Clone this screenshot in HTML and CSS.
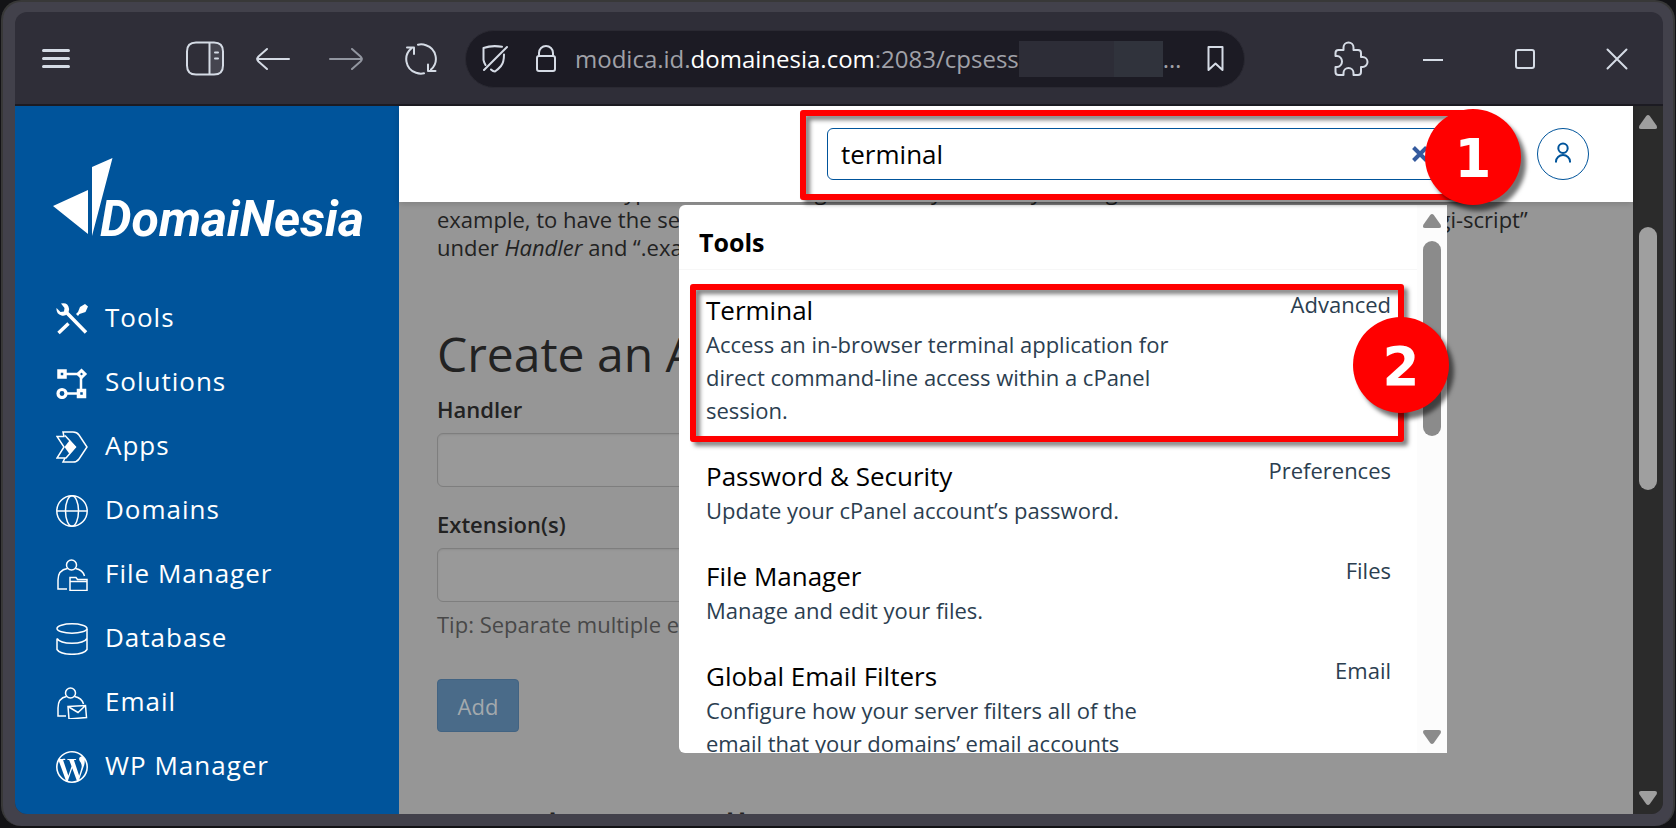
FILE: index.html
```html
<!DOCTYPE html>
<html lang="en">
<head>
<meta charset="utf-8">
<title>cPanel - Apache Handlers</title>
<link rel="stylesheet" href="styles.css">
</head>
<body>
<div class="window">
  <div class="browser">
    <div class="toolbar">
      <button class="tool tool-menu" aria-label="Menu"><svg width="28" height="20" viewBox="0 0 28 20"><path d="M1.5 1.5h25M1.5 9.5h25M1.5 17.5h25" stroke-width="3"/></svg></button>
      <button class="tool tool-side" aria-label="Sidebar"><svg width="38" height="36" viewBox="0 0 38 36"><path d="M24 2h4q8 0 8 8v16q0 8-8 8h-4z" fill="#45454f" stroke="none"/><path d="M10 1.500h18q9 0 9 9v14q0 9-9 9H10q-9 0-9-9v-14q0-9 9-9zM23.500 1.500v32M29 11.500h3M29 17.500h3" stroke-width="2"/></svg></button>
      <button class="tool tool-back" aria-label="Back"><svg width="36" height="24" viewBox="0 0 36 24"><path d="M34 12H2M12 2L3.500 9.500Q1 12 3.500 14.500L12 22" stroke-width="2"/></svg></button>
      <button class="tool tool-forward" aria-label="Forward" disabled><svg width="36" height="24" viewBox="0 0 36 24"><path d="M2 12h32M24 2l8.500 7.500Q35 12 32.500 14.500L24 22" stroke-width="2"/></svg></button>
      <button class="tool tool-reload" aria-label="Reload"><svg width="32" height="32" viewBox="0 0 32 32"><path d="M13 1.700Q17 .8 21 2.200A14.300 14.300 0 0 1 26 26.500M19 30.300Q15 31.200 11 29.800A14.300 14.300 0 0 1 6.500 5.200M2 4.500h7v6.500M30.500 28h-7.500v-6.500" stroke-width="2"/></svg></button>
      <div class="address">
        <svg width="26" height="28" viewBox="0 0 26 28"><path d="M20 1.800Q10 0 1.500 3v12q.5 2.500 2 5M22 9.500q0 8-3 11.500t-6 5.500q-2 0-4-2M25 2L2 25" stroke-width="2"/></svg>
        <svg class="lock" width="20" height="28" viewBox="0 0 20 28"><path d="M3 11V8a7 7 0 0 1 14 0v3M3 11h14q2 0 2 2v11q0 2-2 2H3q-2 0-2-2V13q0-2 2-2z" stroke-width="2"/></svg>
        <div class="url"><span>modica.id.</span><strong>domainesia.com</strong><span>:2083/cpsess</span><i class="redacted"></i><span>…</span></div>
        <button class="tool bookmark" aria-label="Bookmark"><svg width="18" height="28" viewBox="0 0 18 28"><path d="M1.500 2h14v23l-7-6.500-7 6.500z" stroke-width="2"/></svg></button>
      </div>
      <button class="tool tool-ext" aria-label="Extensions"><svg width="36" height="36" viewBox="0 0 36 36"><path d="M1.500 15V12Q1.500 9 4.500 9H9.500V6.500A5 5 0 0 1 19.500 6.500V9H24Q27 9 27 12V16H28.500A5 5 0 0 1 28.500 26H27V31Q27 34 24 34H19.500V32A5 5 0 0 0 9.500 32V34H4.500Q1.500 34 1.500 31V26H3A5 5.500 0 0 0 3 15Z" stroke-width="2"/></svg></button>
      <button class="tool tool-win" aria-label="Minimize"><svg width="22" height="22" viewBox="0 0 22 22"><path d="M1 12h20" stroke-width="2" stroke-linecap="butt"/></svg></button>
      <button class="tool tool-win" aria-label="Maximize"><svg width="22" height="22" viewBox="0 0 22 22"><rect x="2" y="2" width="18" height="18" rx="2" stroke-width="2"/></svg></button>
      <button class="tool tool-win" aria-label="Close"><svg width="22" height="22" viewBox="0 0 22 22"><path d="M1.500 1.500l19 19M20.500 1.500l-19 19" stroke-width="2"/></svg></button>
    </div>

    <div class="page">
      <nav class="sidebar">
        <a class="logo" href="#" aria-label="DomaiNesia">
          <svg width="62" height="80" viewBox="0 0 62 80"><path d="M0 48L35 32V76zM39 9L59.500 0 39 78z"/></svg>
          <span>DomaiNesia</span>
        </a>
        <a class="nav" href="#"><svg viewBox="0 0 32 32"><path class="s" d="M11 10L30 29.500M2.500 30L12.500 20.500" stroke-width="3.500"/><path class="f" d="M5 .5Q12-1 13 5.500 13.500 8 11.500 10.500 9 13.500 5.500 12.500 0 11 .5 5L4.500 9 8 8.500 8.500 5zM29 1l3 2.500-2.500 5.500-6 2-1.500 2-2-2 2-2 2-5z"/></svg>Tools</a>
        <a class="nav" href="#"><svg viewBox="0 0 32 32"><path class="s" d="M9 7h14M25 10v13M10 26.500h12" stroke-width="2.500"/><path class="s" d="M3 4h6v6H3zM22.500 23.500h6v6h-6z" stroke-width="3.500"/><path class="s" d="M25.500 3.500L29 7l-3.500 3.500L22 7z" stroke-width="3"/><circle class="s" cx="6" cy="26.500" r="4" stroke-width="3.200"/></svg>Solutions</a>
        <a class="nav" href="#"><svg viewBox="0 0 32 32"><path class="s" d="M8 5.500L7 1h10q4 0 6 3l8 12-8 12q-2 3-6 3H7l2-4M8.500 5.500H1L8 16 1 27h9l9.500-11L9 4.500" stroke-width="1.500"/><path class="f" d="M13.500 9.500L20 16l-6.500 7L8.500 16z"/></svg>Apps</a>
        <a class="nav" href="#"><svg viewBox="0 0 32 32"><g class="s" stroke-width="1.500"><circle cx="16" cy="16" r="15.200"/><ellipse cx="16" cy="16" rx="6.500" ry="15.200"/><path d="M1 16h30"/></g></svg>Domains</a>
        <a class="nav" href="#"><svg viewBox="0 0 32 32"><g class="s" stroke-width="1.500"><circle cx="15.500" cy="6" r="5"/><path d="M11 30H2V21Q2 11 11.500 9.500M19.500 9.500Q27 11 28.500 17M14 31.500V18.500h6l1.500 2h9.500v11zM14 22.500h17"/></g></svg>File Manager</a>
        <a class="nav" href="#"><svg viewBox="0 0 32 32"><g class="s" stroke-width="1.500"><ellipse cx="16" cy="5.500" rx="15" ry="4.700"/><path d="M1 15.500v11Q4 31.300 16 31.300t15-4.800V6M1 15.500Q4 20.300 16 20.300t15-4.800"/></g></svg>Database</a>
        <a class="nav" href="#"><svg viewBox="0 0 32 32"><g class="s" stroke-width="1.500"><circle cx="14.500" cy="6" r="5"/><path d="M10 29H2V21Q2 11 10.500 9.500M18.500 9.500Q26 11 27.500 17M12 19.500l17.500-1 1 12-17.500 1.500zM12 19.500l10 6 7.500-7"/></g></svg>Email</a>
        <a class="nav" href="#"><svg viewBox="0 0 24 24"><path class="f" d="M21.469 6.825c.84 1.537 1.318 3.3 1.318 5.175 0 3.979-2.156 7.456-5.363 9.325l3.295-9.527c.615-1.540.82-2.771.82-3.864 0-.405-.026-.78-.07-1.110m-7.981.105c.647-.03 1.232-.105 1.232-.105.582-.075.514-.93-.067-.899 0 0-1.755.135-2.880.135-1.064 0-2.850-.15-2.850-.15-.585-.03-.661.855-.075.885 0 0 .54.061 1.125.09l1.680 4.605-2.370 7.080L5.354 6.900c.649-.03 1.234-.1 1.234-.1.585-.075.516-.93-.065-.896 0 0-1.746.138-2.874.138-.2 0-.438-.008-.69-.015C4.911 3.150 8.235 1.215 12 1.215c2.809 0 5.365 1.072 7.286 2.833-.046-.003-.091-.009-.141-.009-1.060 0-1.812.923-1.812 1.914 0 .89.513 1.643 1.060 2.531.411.72.89 1.643.89 2.977 0 .915-.354 1.994-.821 3.479l-1.075 3.585-3.900-11.610.001.014zM12 22.784c-1.059 0-2.081-.153-3.048-.437l3.237-9.406 3.315 9.087c.024.053.05.101.078.149-1.120.393-2.325.609-3.582.609M1.211 12c0-1.564.336-3.050.935-4.390L7.290 21.709C3.694 19.960 1.212 16.271 1.211 12M12 0C5.385 0 0 5.385 0 12s5.385 12 12 12 12-5.385 12-12S18.615 0 12 0"/></svg>WP Manager</a>
      </nav>

      <div class="main">
        <header class="topbar">
          <div class="search">
            <input class="search-input" type="text" value="terminal" aria-label="Search tools">
            <button class="clear" aria-label="Clear search"><svg width="18" height="18" viewBox="0 0 18 18"><path d="M2.500 2.500l13 13M15.500 2.500l-13 13"/></svg></button>

            <div class="results">
              <div class="results-body">
                <h2 class="results-title">Tools</h2>
                <div class="results-list">
                  <a class="result" href="#"><span class="result-text"><span class="result-name">Terminal</span><span class="result-desc">Access an in-browser terminal application for direct command-line access within a cPanel session.</span></span><span class="result-group">Advanced</span></a>
                  <a class="result" href="#"><span class="result-text"><span class="result-name">Password &amp; Security</span><span class="result-desc">Update your cPanel account’s password.</span></span><span class="result-group">Preferences</span></a>
                  <a class="result" href="#"><span class="result-text"><span class="result-name">File Manager</span><span class="result-desc">Manage and edit your files.</span></span><span class="result-group">Files</span></a>
                  <a class="result" href="#"><span class="result-text"><span class="result-name">Global Email Filters</span><span class="result-desc">Configure how your server filters all of the email that your domains’ email accounts</span></span><span class="result-group">Email</span></a>
                </div>
              </div>
              <div class="scroll scroll-light">
                <svg width="18" height="14" viewBox="0 0 18 14"><path d="M7.200 1Q9-1 10.800 1L17.500 10.500Q19 14 16 14H2Q-1 14 .5 10.500z"/></svg>
                <i class="thumb"></i>
                <svg width="18" height="14" viewBox="0 0 18 14"><path d="M7.200 13Q9 15 10.800 13L17.500 3.500Q19 0 16 0H2Q-1 0 .5 3.500z"/></svg>
              </div>
            </div>
            <div class="mark mark-search"></div>
            <div class="mark mark-result"></div>
            <div class="badge badge-one">1</div>
            <div class="badge badge-two">2</div>
          </div>
          <button class="user" aria-label="Account"><svg width="18" height="22" viewBox="0 0 18 22"><path d="M9 1.500a4.700 4.700 0 1 1 0 9.400a4.700 4.700 0 0 1 0-9.400zM2 20.500v-1a7 6.500 0 0 1 14 0v1"/></svg></button>
        </header>

        <div class="content">
          <p class="intro">handle a new file type with an existing handler by manually adding the handler and extension below. For<br>example, to have the server handle any files with an extension of “.example” as CGI scripts, type “cgi-script”<br>under <em>Handler</em> and “.example” under <em>Extension(s)</em>.</p>
          <h1 class="heading">Create an Apache Handler</h1>
          <form class="form">
            <label class="label" for="handler">Handler</label>
            <input class="field" id="handler" type="text">
            <label class="label label-next" for="ext">Extension(s)</label>
            <input class="field" id="ext" type="text">
            <p class="tip">Tip: Separate multiple extensions with a space.</p>
            <button class="add" type="button">Add</button>
          </form>
          <h1 class="heading heading-next">Apache Handlers</h1>
        </div>
      </div>

      <div class="scroll scroll-dark">
        <svg width="18" height="14" viewBox="0 0 18 14"><path d="M7.200 1Q9-1 10.800 1L17.500 10.500Q19 14 16 14H2Q-1 14 .5 10.500z"/></svg>
        <i class="thumb"></i>
        <svg width="18" height="14" viewBox="0 0 18 14"><path d="M7.200 13Q9 15 10.800 13L17.500 3.500Q19 0 16 0H2Q-1 0 .5 3.500z"/></svg>
      </div>
    </div>
  </div>
</div>
</body>
</html>
```
FILE: styles.css
```css
* { box-sizing: border-box; }
body {
  margin: 0;
  height: 100vh;
  padding: 0 1px 2px;
  overflow: hidden;
  background: #131316;
  font-family: "Open Sans", "Noto Sans", sans-serif;
  font-size: 22px;
  color: #222;
}
button, input { font: inherit; }
a { color: inherit; text-decoration: none; }
h1, h2, p { margin: 0; font-weight: 400; }
i, em { font-style: italic; }

.window {
  height: 100%;
  padding: 10px 10px 12px 12px;
  border: 2px solid #383838;
  border-bottom-width: 0;
  border-radius: 20px;
  background: #42414b;
}
.browser {
  height: 100%;
  display: flex;
  flex-direction: column;
  overflow: hidden;
  border-radius: 12px;
  background: #2f2e38;
}

/* Browser toolbar */
.toolbar {
  flex: none;
  display: flex;
  align-items: center;
  height: 94px;
  padding-top: 1px;
  border-bottom: 2px solid #1c1b22;
}
.tool {
  flex: none;
  display: flex;
  align-items: center;
  justify-content: center;
  height: 56px;
  padding: 0;
  border: 0;
  background: none;
}
.toolbar svg {
  flex: none;
  fill: none;
  stroke: #d5dbe5;
  stroke-linecap: round;
  stroke-linejoin: round;
}
.tool-menu { width: 82px; }
.tool-side { width: 72px; margin-left: 72px; }
.tool-back { width: 64px; }
.tool-forward { width: 82px; opacity: .6; }
.tool-reload { width: 68px; margin-right: 10px; }
.tool-ext { width: 70px; margin-left: 72px; }
.tool-win { width: 92px; }
.address {
  flex: 1;
  min-width: 0;
  display: flex;
  align-items: center;
  height: 58px;
  padding: 0 18px 0 16px;
  border: 1px solid #2a2932;
  border-radius: 29px;
  background: #1c1b24;
}
.lock { margin: 0 19px 0 28px; }
.url {
  flex: 1;
  display: flex;
  align-items: center;
  font-size: 24px;
  line-height: 36px;
  color: #a0a1a8;
  white-space: nowrap;
  overflow: hidden;
}
.url strong { font-weight: 400; color: #fff; }
.redacted {
  width: 144px;
  height: 36px;
  background: linear-gradient(90deg, #2d2d37 0 66%, #30333c 66%);
}
.bookmark { width: 20px; }

/* Page */
.page { flex: 1; min-height: 0; display: flex; }
.sidebar {
  flex: none;
  width: 384px;
  padding: 52px 22px 0 38px;
  background: #00549b;
  color: #fff;
}
.sidebar svg { fill: #fff; }
.logo { display: flex; height: 127px; }
.logo svg { flex: none; }
.logo span {
  margin-left: -15px;
  padding-top: 26px;
  font: italic 700 50px/70px Roboto, "Liberation Sans", sans-serif;
}
.nav {
  display: flex;
  align-items: center;
  gap: 17px;
  height: 64px;
  padding-left: 3px;
  font-size: 26px;
  letter-spacing: 1px;
}
.nav svg { width: 32px; height: 32px; margin-top: 4px; }
.nav .s { fill: none; stroke: #fff; }

.main { flex: 1; min-width: 0; display: flex; flex-direction: column; background: #969696; }
.topbar {
  position: relative;
  z-index: 1;
  flex: none;
  display: flex;
  align-items: center;
  justify-content: flex-end;
  height: 96px;
  padding-right: 44px;
  background: #fff;
  box-shadow: 0 2px 6px rgba(0, 0, 0, .15);
}
.search { position: relative; flex: 0 1 620px; }
.search-input {
  display: block;
  width: 100%;
  height: 52px;
  padding: 0 50px 0 13px;
  border: 1px solid #00549b;
  border-radius: 6px;
  background: #fff;
  font-size: 26px;
  color: #000;
}
.clear {
  position: absolute;
  top: 17px;
  right: 18px;
  display: flex;
  padding: 0;
  border: 0;
  background: none;
}
.clear path { stroke: #345a9e; stroke-width: 4; }
.user {
  flex: none;
  display: flex;
  align-items: center;
  justify-content: center;
  width: 52px;
  height: 52px;
  margin-left: 90px;
  padding: 0 0 3px;
  border: 1px solid #00549b;
  border-radius: 50%;
  background: #fff;
}
.user path { fill: none; stroke: #00549b; stroke-width: 2; }

/* Search results */
.results {
  position: absolute;
  top: 77px;
  right: 0;
  display: flex;
  width: 768px;
  height: 548px;
  overflow: hidden;
  border-radius: 6px 0 0 6px;
  background: #fff;
}
.results-body { flex: 1; min-width: 0; }
.results-title {
  height: 65px;
  padding: 19px 20px 0;
  border-bottom: 1px solid #f7f7f7;
  font-size: 25px;
  line-height: 36px;
  font-weight: 700;
  color: #000;
}
.results-list { padding: 6px 26px 0 27px; }
.result {
  display: flex;
  justify-content: space-between;
  padding: 16px 0 15px;
  line-height: 33px;
  color: #2b3e50;
}
.result-text { width: 70%; }
.result-name { display: block; font-size: 26px; line-height: 36px; color: #000; }
.result-desc { display: block; }
.result-group { margin-top: -4px; }

/* Scrollbars */
.scroll {
  flex: none;
  display: flex;
  flex-direction: column;
  align-items: center;
  width: 30px;
  padding: 9px 0;
}
.scroll svg { flex: none; fill: currentColor; }
.thumb { width: 18px; border-radius: 9px; background: currentColor; }
.scroll-light { background: #fcfcfc; color: #8b8b8b; }
.scroll-light .thumb { height: 195px; margin: 13px 0 auto; }
.scroll-dark { background: #2b2b2b; color: #9f9f9f; }
.scroll-dark .thumb { height: 263px; margin: 98px 0 auto; }

/* Step callouts */
.mark {
  position: absolute;
  border: 6px solid #f00;
  border-radius: 3px;
  filter: drop-shadow(4px 4px 2px rgba(0, 0, 0, .5));
}
.mark-search { top: -18px; right: -26px; bottom: -20px; left: -27px; }
.mark-result { top: 156px; right: 43px; width: 714px; height: 158px; }
.badge {
  position: absolute;
  width: 96px;
  height: 96px;
  border-radius: 50%;
  background: #f00;
  box-shadow: 5px 6px 4px rgba(0, 0, 0, .55);
  color: #fff;
  font: 700 53px/100px "DejaVu Sans", sans-serif;
  text-align: center;
}
.badge-one { top: -19px; right: -74px; }
.badge-two { top: 189px; right: -2px; }

/* Form content */
.content { flex: 1; min-height: 0; padding: 0 38px; overflow: hidden; }
.intro { margin-top: -25px; line-height: 28px; white-space: nowrap; }
.heading { margin-top: 60px; font-size: 48px; line-height: 66px; }
.form { display: flex; flex-direction: column; align-items: flex-start; margin-top: 7px; }
.label { font-weight: 600; line-height: 30px; }
.label-next { margin-top: 22px; }
.field {
  width: 50%;
  height: 54px;
  margin-top: 9px;
  border: 1px solid #7e7e7e;
  border-radius: 6px;
  background: #999;
  box-shadow: inset 0 1px 2px rgba(0, 0, 0, .08);
}
.tip { margin-top: 7px; line-height: 30px; color: #484848; white-space: nowrap; }
.add {
  width: 82px;
  height: 53px;
  margin-top: 40px;
  padding: 0;
  border: 1px solid #426382;
  border-radius: 4px;
  background: #4a6b89;
  color: #a3a9ad;
}
.heading-next { margin-top: 66px; white-space: nowrap; }
```
